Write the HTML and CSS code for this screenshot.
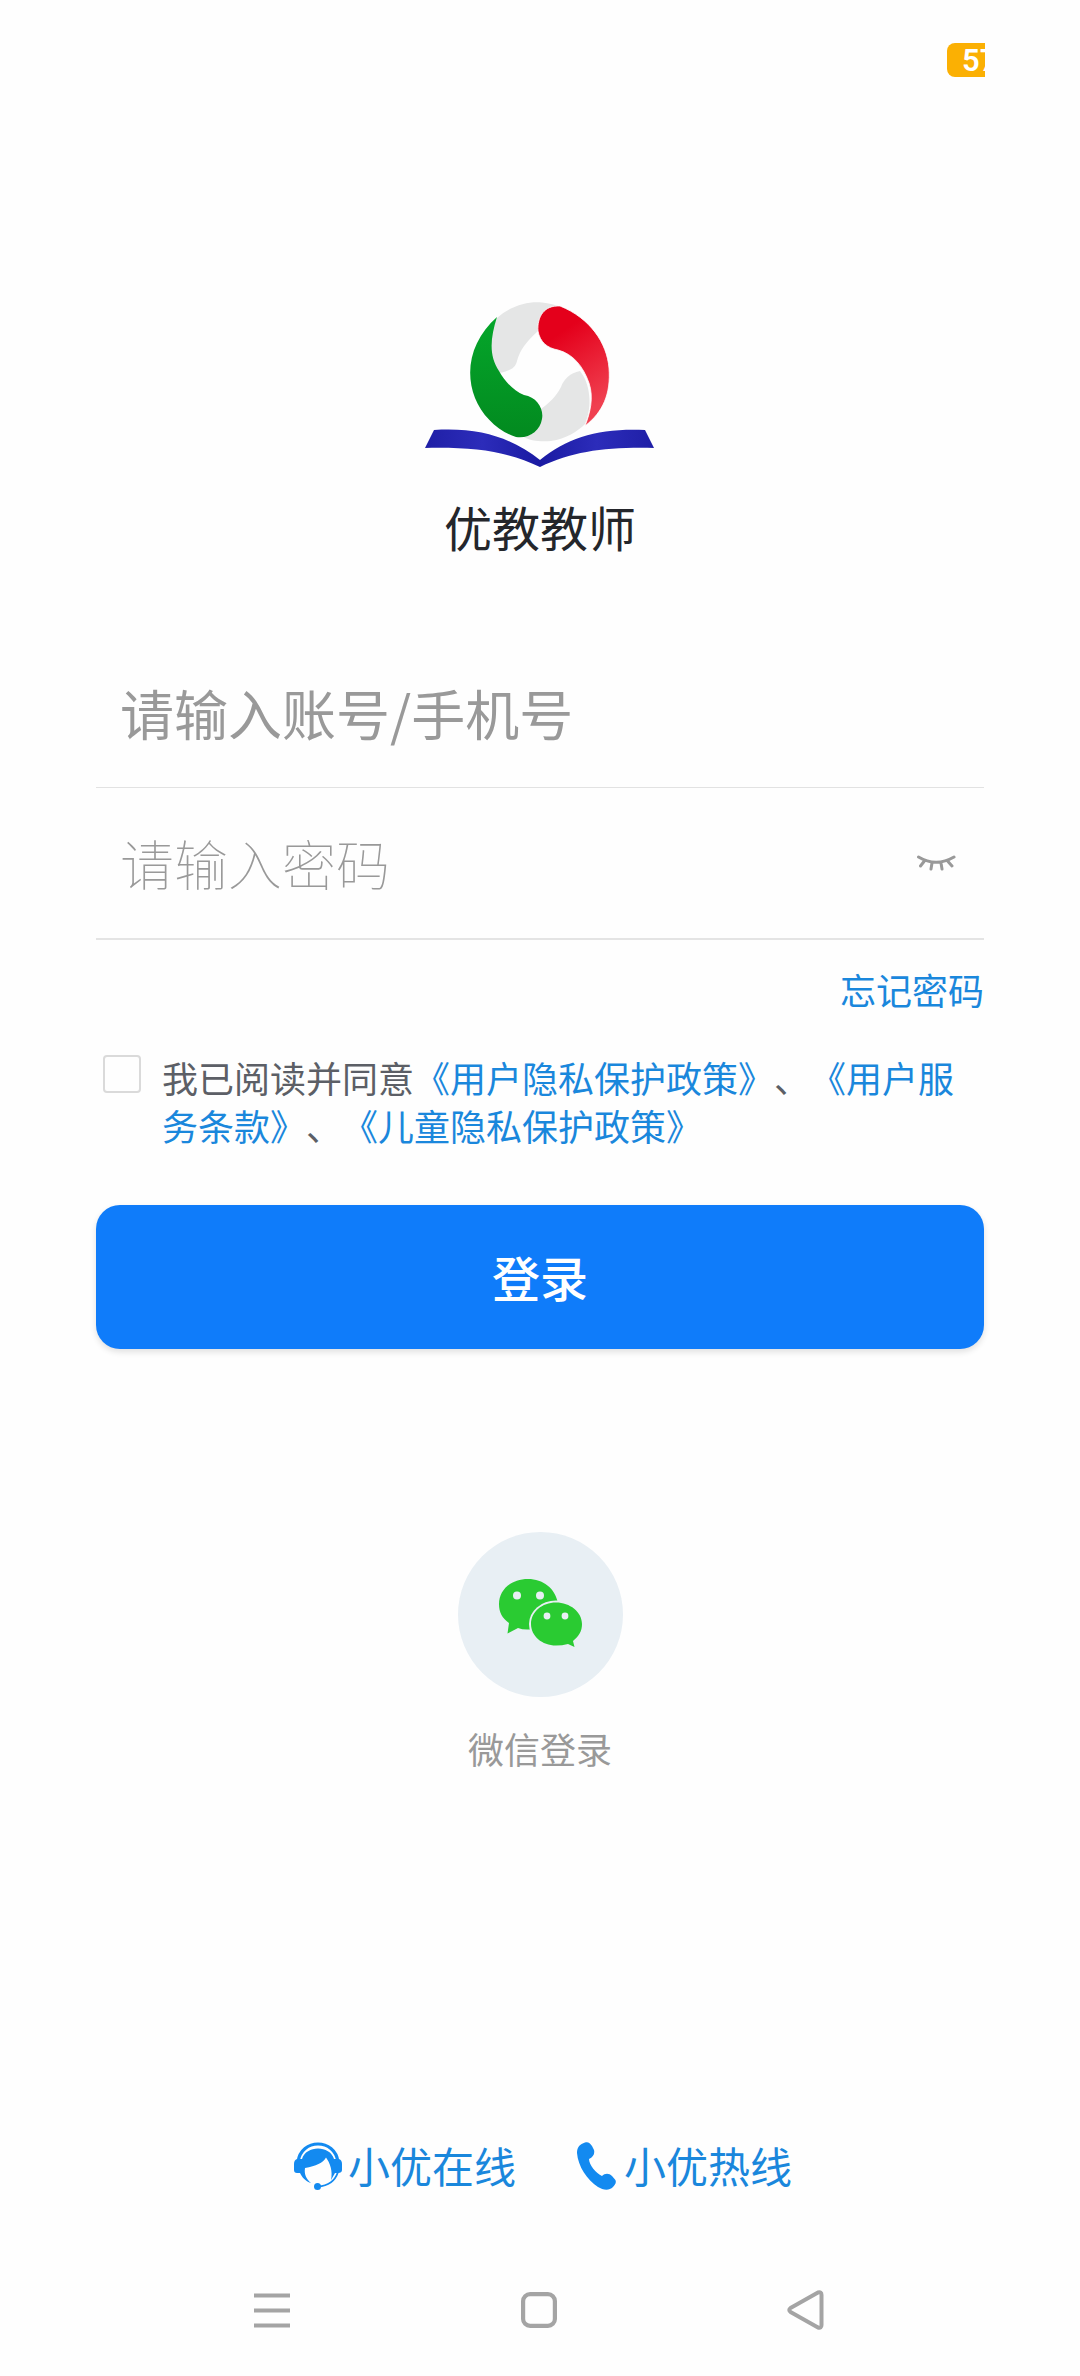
FILE: index.html
```html
<!DOCTYPE html>
<html lang="zh-CN">
<head>
<meta charset="utf-8">
<title>优教教师</title>
<link rel="stylesheet" href="styles.css">
</head>
<body>
<div class="screen">
  <header class="status"><div class="battery">57</div></header>
  <main class="content">
    <section class="brand">
      <svg class="logo" width="230" height="168" viewBox="0 0 230 168">
        <defs>
          <linearGradient id="red" x1="0" y1="0" x2="0.4" y2="1"><stop offset="0.3" stop-color="#e4001b"/><stop offset="1" stop-color="#f04050"/></linearGradient>
          <linearGradient id="green" x1="0" y1="0" x2="0" y2="1"><stop offset="0" stop-color="#05a62b"/><stop offset="1" stop-color="#028a1f"/></linearGradient>
          <linearGradient id="page" x1="0" y1="0" x2="1" y2="0"><stop offset="0" stop-color="#1f1fa6"/><stop offset="0.25" stop-color="#2c2cba"/><stop offset="0.5" stop-color="#1a1aa2"/><stop offset="0.75" stop-color="#2c2cba"/><stop offset="1" stop-color="#1f1fa6"/></linearGradient>
        </defs>
        <path fill="#e5e6e6" d="M72 18C85 6 103 1 117 2.500C124 3 131 5 136 7C120 7 111 17 113 31C101 42 95 50 92 61C90 69 85 70 75 73C61 53 63 36 72 18Z"/>
        <path fill="#e5e6e6" d="M155 71C145 73 139 79 136 87C131 97 124 103 116 109C119 123 113 136 97 136C105 141 116 142 126 141C141 139 153 131 160 124C168 106 165 83 155 71Z"/>
        <path fill="url(#green)" d="M72 17C65 39 64 56 74 71C80 82 89 91 99 95C112 97 119 109 117 119C115 131 104 139 91 137C74 132 57 116 50 98C39 70 47 39 72 17Z"/>
        <path fill="url(#red)" stroke="#fefefe" stroke-width="0.800" d="M135 6C119 5 112 17 113 31C115 42 122 48 133 50C148 54 158 66 164 83C169 98 165 113 160 126C178 112 186 94 184 68C182 43 165 18 135 6Z"/>
        <path fill="url(#page)" d="M9 130C55 127 87 138 115 160C143 137 175 128 220 130L229 148C181 147 149 151 115 167C81 151 49 147 0 148Z"/>
      </svg>
      <h1 class="title">优教教师</h1>
    </section>
    <form class="form">
      <div class="field account"><span class="hint">请输入账号/手机号</span></div>
      <div class="field password">
        <span class="hint">请输入密码</span>
        <svg class="eye" width="40" height="18" viewBox="0 0 40 18" fill="none" stroke="#999" stroke-width="3" stroke-linecap="round"><path d="M2.500 3Q20 13.500 38 3M8 7.500L4.500 12M16 9L15 15M25 9L26 15M32 7.500L36 12"/></svg>
      </div>
      <a class="forgot">忘记密码</a>
      <div class="agree">
        <span class="checkbox"></span>
        <p class="terms">我已阅读并同意<a>《用户隐私保护政策》</a>、<a>《用户服务条款》</a>、<a>《儿童隐私保护政策》</a></p>
      </div>
      <div class="login">登录</div>
    </form>
    <section class="wechat">
      <div class="disc">
        <svg width="84" height="70" viewBox="0 0 84 70">
          <path fill="#2acb32" d="M30 1C13 1 1 12 1 26C1 34 4 40 11 45L9.500 55.500L20 50Q25 52 32 51.500L60 25C57 10 45 1 30 1Z"/>
          <ellipse cx="58" cy="46" rx="27" ry="23.500" fill="#e8eff4"/>
          <path fill="#2acb32" d="M58 24.500C44 24.500 33 34 33 46C33 58 44 67.500 58 67.500Q64 67.500 70 66L76.500 69L75 63C81 58 84 53 84 46C84 34 72 24.500 58 24.500Z"/>
          <g fill="#e8eff4"><circle cx="19" cy="17.500" r="4"/><circle cx="42" cy="17.500" r="4"/><circle cx="49" cy="38" r="3.400"/><circle cx="67" cy="38" r="3.400"/></g>
        </svg>
      </div>
      <div class="wechat-label">微信登录</div>
    </section>
  </main>
  <footer class="support">
    <a class="service">
      <svg width="48" height="48" viewBox="0 0 48 48">
        <path d="M4 20C7-4 41-4 44 20" fill="none" stroke="#138af0" stroke-width="3.200"/>
        <path fill="#138af0" d="M3 17H8C12 3 36 3 40 17H45Q48 18 48 22V28Q48 31 44 31L41 31L37 38C39 29 36 21 32 15.500C29 21 22 24 11 26C10 32 12 37 17 41C11 39 8 35 6 31H3Q0 31 0 28V22Q0 18 3 17Z"/>
        <path d="M44 30C41 39 34 44 24 44.500" fill="none" stroke="#138af0" stroke-width="1.800"/>
        <circle cx="23.500" cy="44.500" r="3.500" fill="#138af0"/>
      </svg>
      <span>小优在线</span>
    </a>
    <a class="hotline">
      <svg width="39" height="48" viewBox="0 0 39 48"><path fill="#138af0" d="M8 0.500C11-0.500 13 1 15 4L17 8C18 12 16 15 12 17C12 23 19 31 25 34C28 31 32 31 35 34L38 37.500C40 40 38 43 36 45C32 49 26 48 21 45C10 38 1 24 0 11C0 5 3 2 8 0.500Z"/></svg>
      <span>小优热线</span>
    </a>
  </footer>
  <nav class="navbar">
    <svg width="36" height="40" viewBox="0 0 36 40" stroke="#a4a4a4" stroke-width="4.200"><path d="M0 5.500H36M0 20.500H36M0 35.500H36"/></svg>
    <svg width="36" height="40" viewBox="0 0 36 40" fill="none" stroke="#a4a4a4" stroke-width="4.200"><rect x="2.100" y="4.100" width="31.800" height="31.800" rx="7"/></svg>
    <svg width="37" height="40" viewBox="0 0 37 40" fill="none" stroke="#a4a4a4" stroke-width="4" stroke-linejoin="round"><path d="M3.500 18L31 2.500Q34.500 1.500 34.500 5V35Q34.500 38.500 31 37.500L3.500 22Q1 20 3.500 18Z"/></svg>
  </nav>
</div>
</body>
</html>
```
FILE: styles.css
```css
* { box-sizing: border-box; }
body {
  margin: 0;
  background: #fefefe;
  font-family: "Noto Sans CJK SC", sans-serif;
  text-spacing-trim: space-all;
}
svg { display: block; flex: none; }
.screen {
  width: 1080px;
  height: 2376px;
  padding: 0 96px;
  display: flex;
  flex-direction: column;
}
.status {
  height: 77px;
  padding-top: 43px;
  display: flex;
  justify-content: flex-end;
}
.battery {
  width: 38px;
  height: 34px;
  padding-left: 15px;
  margin-right: -1px;
  overflow: hidden;
  border-radius: 8px 0 0 8px;
  background: #fbb003;
  color: #fff;
  font: 600 31px/35px Roboto, sans-serif;
}
.content { flex: 1; }
.brand {
  padding-top: 223px;
  display: flex;
  flex-direction: column;
  align-items: center;
}
.title {
  margin: 22px 0 0;
  font-size: 48px;
  font-weight: 400;
  line-height: 72px;
  color: #24262b;
}
.form { display: flex; flex-direction: column; }
.field {
  display: flex;
  align-items: center;
  justify-content: space-between;
  padding: 0 28px 0 24px;
  font-size: 54px;
  line-height: 80px;
  color: #999;
  border-bottom: 1px solid #e2e2e2;
}
.account { height: 148px; margin-top: 78px; padding-bottom: 2px; }
.password { height: 152px; border-bottom: 2px solid #e4e4e4; }
.password .hint { font-weight: 100; }
.forgot {
  align-self: flex-end;
  margin-top: 23px;
  font-size: 36px;
  line-height: 52px;
  color: #1a87dc;
}
.agree {
  display: flex;
  gap: 21px;
  padding-left: 7px;
  margin-top: 38px;
}
.checkbox {
  width: 38px;
  height: 38px;
  flex: none;
  margin-top: 2px;
  border: 2px solid #dadada;
  border-radius: 4px;
}
.terms {
  margin: 0;
  flex: 1;
  font-size: 36px;
  line-height: 48px;
  color: #5c5f66;
}
.terms a { color: #1a87dc; }
.login {
  height: 144px;
  margin-top: 56px;
  border-radius: 24px;
  background: #0f7cfa;
  box-shadow: 0 3px 6px rgba(0, 0, 0, 0.12);
  color: #fff;
  font-size: 48px;
  font-weight: 500;
  line-height: 142px;
  text-align: center;
}
.wechat {
  margin-top: 183px;
  display: flex;
  flex-direction: column;
  align-items: center;
}
.disc {
  width: 165px;
  height: 165px;
  padding-bottom: 3px;
  border-radius: 50%;
  background: #e8eff4;
  display: flex;
  align-items: center;
  justify-content: center;
}
.wechat-label {
  margin-top: 25px;
  font-size: 36px;
  line-height: 52px;
  color: #999;
}
.support {
  height: 60px;
  margin-bottom: 94px;
  padding-left: 198px;
  display: flex;
  align-items: center;
  gap: 61px;
  font-size: 42px;
  line-height: 60px;
  color: #1a87dc;
}
.support span { padding-bottom: 3px; }
.service, .hotline { display: flex; align-items: center; gap: 6px; }
.hotline { gap: 8px; }
.navbar {
  height: 86px;
  padding: 0 160px 0 158px;
  display: flex;
  justify-content: space-between;
}
```
